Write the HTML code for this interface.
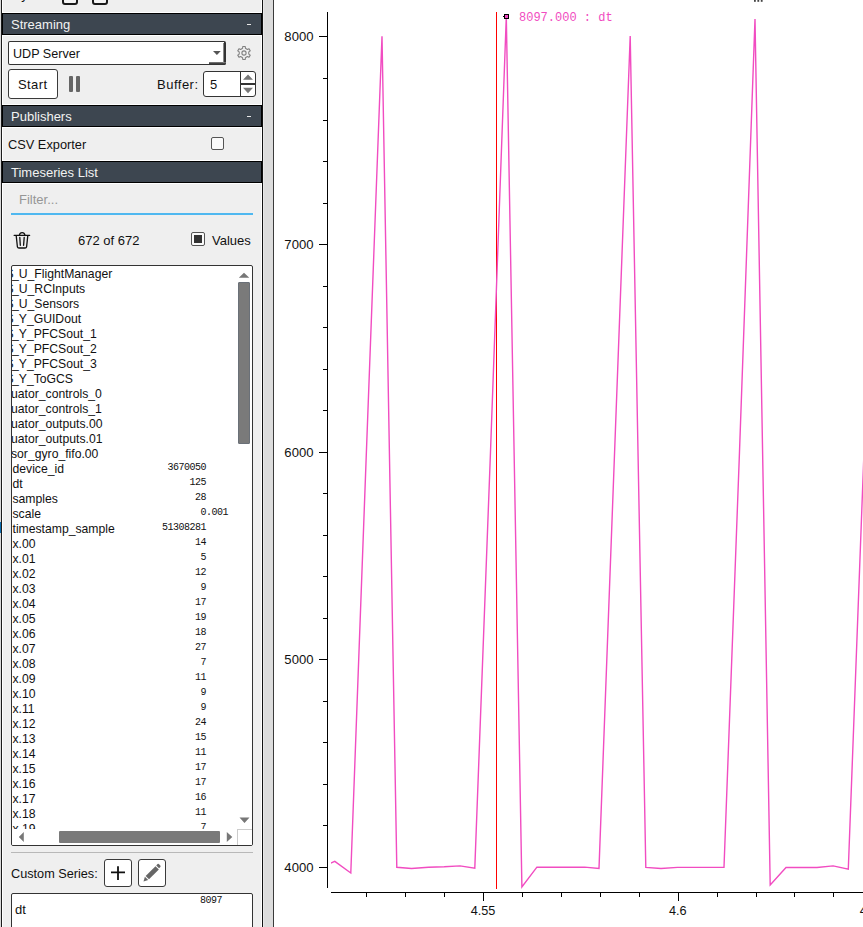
<!DOCTYPE html>
<html><head><meta charset="utf-8">
<style>
html,body{margin:0;padding:0}
body{width:863px;height:927px;overflow:hidden;position:relative;background:#fff;font-family:"Liberation Sans",sans-serif;color:#111}
.a{position:absolute}
.t{position:absolute;white-space:nowrap;font-size:13px;line-height:20px}
.hdr{position:absolute;left:2px;width:258px;height:20px;background:#3d4650;border:1px solid #000}
.hdr span{position:absolute;left:8px;top:1px;font-size:13px;line-height:20px;color:#f2f2f2;white-space:nowrap}
.hdr i{position:absolute;left:244px;top:10px;width:4px;height:1px;background:#e8e8e8}
.btn{position:absolute;background:#fff;border:1px solid #3a3a3a;border-radius:3px;box-sizing:border-box}
.row{position:absolute;left:0;white-space:nowrap;font-size:12.2px;line-height:15px;height:15px}
.val{position:absolute;white-space:nowrap;font-family:"Liberation Mono",monospace;font-size:10px;letter-spacing:-0.5px;line-height:15px;text-align:right}
</style></head><body>

<!-- left panel -->
<div class="a" style="left:0;top:0;width:1px;height:927px;background:#d9d9d9"></div>
<div class="a" style="left:1px;top:0;width:1px;height:927px;background:#1c1c1c"></div>
<div class="a" style="left:2px;top:0;width:260px;height:927px;background:#efefef"></div>
<div class="a" style="left:2px;top:0;width:1px;height:927px;background:#fff"></div>
<div class="a" style="left:261px;top:0;width:1px;height:927px;background:#fff"></div>
<div class="a" style="left:262px;top:0;width:1px;height:927px;background:#111"></div>
<div class="a" style="left:263px;top:0;width:1px;height:927px;background:#e8e8e8"></div>
<div class="a" style="left:264px;top:0;width:9px;height:927px;background:#dcdcdc"></div>
<div class="a" style="left:273px;top:0;width:1px;height:927px;background:#3a3a3a"></div>

<!-- top partial row -->
<div class="t" style="left:12.6px;top:-15.3px">Sync</div>
<div class="a" style="left:62px;top:-11px;width:12px;height:12px;border:2px solid #1a1a1a;border-radius:3px;background:#f4f4f4"></div>
<div class="a" style="left:92px;top:-11px;width:12px;height:12px;border:2px solid #1a1a1a;border-radius:3px;background:#f4f4f4"></div>

<!-- Streaming -->
<div class="a" style="left:2px;top:12px;width:260px;height:1px;background:#fff"></div>
<div class="hdr" style="top:13px"><span>Streaming</span><i></i></div>
<div class="a" style="left:2px;top:35px;width:260px;height:1px;background:#fff"></div>

<div class="a" style="left:8px;top:41px;width:215px;height:22px;background:#fff;border:1px solid #333;border-right:2px solid #333;border-radius:2px"></div>
<div class="a" style="left:209px;top:62px;width:17px;height:3px;background:linear-gradient(#888,#333 60%);border-radius:0 0 2px 0"></div>
<div class="a" style="left:223px;top:43px;width:1px;height:20px;background:linear-gradient(90deg,#999,#777)"></div>
<div class="t" style="left:13px;top:44px;font-size:12.6px">UDP Server</div>
<svg class="a" style="left:212px;top:49px" width="10" height="7"><path d="M1,2.1 L8.8,2.1 L4.9,6 Z" fill="#555"/></svg>
<!-- gear -->
<svg class="a" style="left:235px;top:44px" width="18" height="18" viewBox="0 0 18 18">
<path fill="none" stroke="#808080" stroke-width="1.1" stroke-linejoin="round" d="M7.57,4.31 L7.74,2.52 L10.26,2.52 L10.43,4.31 L12.34,5.42 L13.98,4.67 L15.24,6.85 L13.77,7.90 L13.77,10.10 L15.24,11.15 L13.98,13.33 L12.34,12.58 L10.43,13.69 L10.26,15.48 L7.74,15.48 L7.57,13.69 L5.66,12.58 L4.02,13.33 L2.76,11.15 L4.23,10.10 L4.23,7.90 L2.76,6.85 L4.02,4.67 L5.66,5.42 Z"/>
<circle cx="9" cy="9" r="2.1" fill="none" stroke="#808080" stroke-width="1.1"/>
</svg>

<div class="btn" style="left:8px;top:69px;width:50px;height:30px"></div>
<div class="t" style="left:18px;top:75px;letter-spacing:0.4px">Start</div>
<div class="a" style="left:69.3px;top:75.8px;width:4.2px;height:16.2px;background:#666;border-radius:1px"></div>
<div class="a" style="left:76px;top:75.8px;width:4.4px;height:16.2px;background:#666;border-radius:1px"></div>
<div class="t" style="left:157px;top:75px;letter-spacing:0.5px">Buffer:</div>
<div class="a" style="left:203px;top:71px;width:51px;height:24px;background:#fff;border:1px solid #333;border-radius:3px"></div>
<div class="a" style="left:240px;top:72px;width:1px;height:24px;background:#333"></div>
<div class="a" style="left:241px;top:83px;width:14px;height:1.5px;background:#333"></div>
<svg class="a" style="left:242px;top:73px" width="12" height="22"><path d="M1,6.8 L11,6.8 L6,1.5 Z M1,14.8 L11,14.8 L6,20.2 Z" fill="#777"/></svg>
<div class="t" style="left:210px;top:75px">5</div>

<!-- Publishers -->
<div class="a" style="left:2px;top:104px;width:260px;height:1px;background:#fff"></div>
<div class="hdr" style="top:105px"><span>Publishers</span><i></i></div>
<div class="a" style="left:2px;top:127px;width:260px;height:1px;background:#fff"></div>
<div class="t" style="left:8px;top:135px;font-size:12.8px">CSV Exporter</div>
<div class="a" style="left:211px;top:137px;width:11px;height:11px;border:1.5px solid #555;border-radius:2px;background:#fafafa"></div>

<!-- Timeseries List -->
<div class="a" style="left:2px;top:160px;width:260px;height:1px;background:#fff"></div>
<div class="hdr" style="top:161px"><span>Timeseries List</span></div>
<div class="a" style="left:2px;top:183px;width:260px;height:1px;background:#fff"></div>
<div class="t" style="left:19px;top:190px;color:#969696">Filter...</div>
<div class="a" style="left:11px;top:213px;width:242px;height:2px;background:#4fb8f0"></div>

<svg class="a" style="left:12px;top:229px" width="20" height="21" viewBox="0 0 20 21">
<g fill="none" stroke="#111" stroke-width="1.3" stroke-linecap="round" stroke-linejoin="round">
<path d="M2.2,6.4 L17.6,6.4"/>
<path d="M7.4,6.2 A2.8,3.2 0 0 1 12.9,6.2"/>
<path d="M4.2,6.6 L5.4,17.8 Q5.7,19 7,19 L13,19 Q14.3,19 14.6,17.8 L15.8,6.6"/>
<path d="M7.8,8.4 L8.3,16.3 M12.2,8.4 L11.6,16.3"/>
</g></svg>
<div class="t" style="left:78px;top:231px">672 of 672</div>
<div class="a" style="left:191px;top:232px;width:11.5px;height:11.5px;border:1.5px solid #555;border-radius:2px;background:#fafafa"></div>
<div class="a" style="left:194px;top:235px;width:8px;height:8px;background:#333"></div>
<div class="t" style="left:212px;top:231px">Values</div>

<!-- list box -->
<div class="a" id="list" style="left:11px;top:265px;width:240px;height:579px;background:#fff;border:1px solid #333;border-radius:2px;overflow:hidden">
<div class="row" style="top:1px;left:-6.5px">S</div><div class="row" style="top:1px;left:0px">_U_FlightManager</div>
<div class="row" style="top:16px;left:-6.5px">S</div><div class="row" style="top:16px;left:0px">_U_RCInputs</div>
<div class="row" style="top:31px;left:-6.5px">S</div><div class="row" style="top:31px;left:0px">_U_Sensors</div>
<div class="row" style="top:46px;left:-6.5px">S</div><div class="row" style="top:46px;left:0px">_Y_GUIDout</div>
<div class="row" style="top:61px;left:-6.5px">S</div><div class="row" style="top:61px;left:0px">_Y_PFCSout_1</div>
<div class="row" style="top:76px;left:-6.5px">S</div><div class="row" style="top:76px;left:0px">_Y_PFCSout_2</div>
<div class="row" style="top:91px;left:-6.5px">S</div><div class="row" style="top:91px;left:0px">_Y_PFCSout_3</div>
<div class="row" style="top:106px;left:-6.5px">S</div><div class="row" style="top:106px;left:0px">_Y_ToGCS</div>
<div class="row" style="top:121px;left:-1px">uator_controls_0</div>
<div class="row" style="top:136px;left:-1px">uator_controls_1</div>
<div class="row" style="top:151px;left:-1px">uator_outputs.00</div>
<div class="row" style="top:166px;left:-1px">uator_outputs.01</div>
<div class="row" style="top:181px;left:-1px">sor_gyro_fifo.00</div>
<div class="row" style="top:196px;left:0.5px">device_id</div>
<div class="val" style="top:194px;left:129px;width:65px">3670050</div>
<div class="row" style="top:211px;left:0.5px">dt</div>
<div class="val" style="top:209px;left:129px;width:65px">125</div>
<div class="row" style="top:226px;left:0.5px">samples</div>
<div class="val" style="top:224px;left:129px;width:65px">28</div>
<div class="row" style="top:241px;left:0.5px">scale</div>
<div class="val" style="top:239px;left:150px;width:66px">0.001</div>
<div class="row" style="top:256px;left:0.5px">timestamp_sample</div>
<div class="val" style="top:254px;left:129px;width:65px">51308281</div>
<div class="row" style="top:271px;left:0.5px">x.00</div>
<div class="val" style="top:269px;left:129px;width:65px">14</div>
<div class="row" style="top:286px;left:0.5px">x.01</div>
<div class="val" style="top:284px;left:129px;width:65px">5</div>
<div class="row" style="top:301px;left:0.5px">x.02</div>
<div class="val" style="top:299px;left:129px;width:65px">12</div>
<div class="row" style="top:316px;left:0.5px">x.03</div>
<div class="val" style="top:314px;left:129px;width:65px">9</div>
<div class="row" style="top:331px;left:0.5px">x.04</div>
<div class="val" style="top:329px;left:129px;width:65px">17</div>
<div class="row" style="top:346px;left:0.5px">x.05</div>
<div class="val" style="top:344px;left:129px;width:65px">19</div>
<div class="row" style="top:361px;left:0.5px">x.06</div>
<div class="val" style="top:359px;left:129px;width:65px">18</div>
<div class="row" style="top:376px;left:0.5px">x.07</div>
<div class="val" style="top:374px;left:129px;width:65px">27</div>
<div class="row" style="top:391px;left:0.5px">x.08</div>
<div class="val" style="top:389px;left:129px;width:65px">7</div>
<div class="row" style="top:406px;left:0.5px">x.09</div>
<div class="val" style="top:404px;left:129px;width:65px">11</div>
<div class="row" style="top:421px;left:0.5px">x.10</div>
<div class="val" style="top:419px;left:129px;width:65px">9</div>
<div class="row" style="top:436px;left:0.5px">x.11</div>
<div class="val" style="top:434px;left:129px;width:65px">9</div>
<div class="row" style="top:451px;left:0.5px">x.12</div>
<div class="val" style="top:449px;left:129px;width:65px">24</div>
<div class="row" style="top:466px;left:0.5px">x.13</div>
<div class="val" style="top:464px;left:129px;width:65px">15</div>
<div class="row" style="top:481px;left:0.5px">x.14</div>
<div class="val" style="top:479px;left:129px;width:65px">11</div>
<div class="row" style="top:496px;left:0.5px">x.15</div>
<div class="val" style="top:494px;left:129px;width:65px">17</div>
<div class="row" style="top:511px;left:0.5px">x.16</div>
<div class="val" style="top:509px;left:129px;width:65px">17</div>
<div class="row" style="top:526px;left:0.5px">x.17</div>
<div class="val" style="top:524px;left:129px;width:65px">16</div>
<div class="row" style="top:541px;left:0.5px">x.18</div>
<div class="val" style="top:539px;left:129px;width:65px">11</div>
<div class="row" style="top:556px;left:0.5px">x.19</div>
<div class="val" style="top:554px;left:129px;width:65px">7</div>
<svg class="a" style="left:0;top:0" width="240" height="579"><path d="M226.8,11.8 L237.3,11.8 L232,6.8 Z M227.5,551.5 L237.5,551.5 L232.5,557 Z M12.5,572 L7.5,571.5 L12.5,566.5 Z" fill="#777"/></svg>
<div class="a" style="left:226px;top:16px;width:10px;height:160px;background:#7a7a7a;border:1px solid #6a7078;border-radius:1px"></div>
<div class="a" style="left:0;top:563px;width:240px;height:16px;background:#fff"></div>
<div class="a" style="left:47px;top:565px;width:161px;height:11.5px;background:#7a7a7a;border-radius:1px"></div>
<svg class="a" style="left:-1px;top:563px" width="240" height="15"><path d="M12.8,3 L12.8,13 L7.8,8 Z M215.8,3 L215.8,13 L221.3,8 Z" fill="#777"/></svg>
<div class="a" style="left:225px;top:563px;width:14px;height:15px;background:#fff;border:1px solid #ccc"></div>
</div>

<!-- separator / custom series -->
<div class="a" style="left:11px;top:852px;width:242px;height:1px;background:#b8b8b8"></div>
<div class="t" style="left:11px;top:864px;font-size:12.7px">Custom Series:</div>
<div class="btn" style="left:104px;top:859px;width:28px;height:28px;border-width:1.5px"></div>
<svg class="a" style="left:104px;top:859px" width="28" height="28"><path d="M7,13.4 L21,13.4 M14,7.2 L14,21" stroke="#111" stroke-width="1.8"/></svg>
<div class="btn" style="left:138px;top:859px;width:28px;height:28px;border-width:1.5px"></div>
<svg class="a" style="left:138px;top:859px" width="28" height="28">
<g fill="#666" transform="translate(5.5,22.6) scale(0.93) translate(-5.5,-22.6)">
<path d="M5.5,22.6 L7,17.4 L10.6,21 Z"/>
<path d="M7.8,16.6 L18.4,6 L22,9.6 L11.4,20.2 Z"/>
<path d="M19.2,5.2 L20.6,3.8 Q21.3,3.2 22,3.8 L23.6,5.4 Q24.2,6.1 23.6,6.8 L22.2,8.2 Z"/>
</g></svg>
<div class="a" style="left:11px;top:893px;width:240px;height:40px;background:#fff;border:1px solid #333;border-radius:2px"></div>
<div class="t" style="left:15px;top:900px">dt</div>
<div class="val" style="left:171px;top:893px;width:51px">8097</div>

<div class="a" style="left:0;top:522px;width:1px;height:11px;background:#0b6db0"></div>

<!-- plot -->
<svg class="a" style="left:0;top:0" width="863" height="927">
<defs><clipPath id="pc"><rect x="331" y="0" width="532" height="927"/></clipPath></defs>
<g stroke="#000" stroke-width="1" shape-rendering="crispEdges">
<line x1="327.5" y1="12" x2="327.5" y2="888"/>
<line x1="319" y1="867.5" x2="327" y2="867.5"/>
<line x1="323" y1="825.5" x2="327" y2="825.5"/>
<line x1="323" y1="784.5" x2="327" y2="784.5"/>
<line x1="323" y1="742.5" x2="327" y2="742.5"/>
<line x1="323" y1="701.5" x2="327" y2="701.5"/>
<line x1="319" y1="659.5" x2="327" y2="659.5"/>
<line x1="323" y1="618.5" x2="327" y2="618.5"/>
<line x1="323" y1="576.5" x2="327" y2="576.5"/>
<line x1="323" y1="535.5" x2="327" y2="535.5"/>
<line x1="323" y1="493.5" x2="327" y2="493.5"/>
<line x1="319" y1="452.5" x2="327" y2="452.5"/>
<line x1="323" y1="410.5" x2="327" y2="410.5"/>
<line x1="323" y1="369.5" x2="327" y2="369.5"/>
<line x1="323" y1="327.5" x2="327" y2="327.5"/>
<line x1="323" y1="286.5" x2="327" y2="286.5"/>
<line x1="319" y1="244.5" x2="327" y2="244.5"/>
<line x1="323" y1="203.5" x2="327" y2="203.5"/>
<line x1="323" y1="161.5" x2="327" y2="161.5"/>
<line x1="323" y1="120.5" x2="327" y2="120.5"/>
<line x1="323" y1="78.5" x2="327" y2="78.5"/>
<line x1="319" y1="36.5" x2="327" y2="36.5"/>
<line x1="331" y1="892.5" x2="863" y2="892.5"/>
<line x1="366.5" y1="893" x2="366.5" y2="897"/>
<line x1="405.5" y1="893" x2="405.5" y2="897"/>
<line x1="444.5" y1="893" x2="444.5" y2="897"/>
<line x1="483.5" y1="893" x2="483.5" y2="901"/>
<line x1="522.5" y1="893" x2="522.5" y2="897"/>
<line x1="561.5" y1="893" x2="561.5" y2="897"/>
<line x1="600.5" y1="893" x2="600.5" y2="897"/>
<line x1="639.5" y1="893" x2="639.5" y2="897"/>
<line x1="678.5" y1="893" x2="678.5" y2="901"/>
<line x1="717.5" y1="893" x2="717.5" y2="897"/>
<line x1="756.5" y1="893" x2="756.5" y2="897"/>
<line x1="794.5" y1="893" x2="794.5" y2="897"/>
<line x1="833.5" y1="893" x2="833.5" y2="897"/>
</g>
<g font-family="Liberation Sans" font-size="13.1" fill="#111" text-anchor="end">
<text x="313.5" y="871.5">4000</text>
<text x="313.5" y="663.5">5000</text>
<text x="313.5" y="456.5">6000</text>
<text x="313.5" y="248.5">7000</text>
<text x="313.5" y="40.5">8000</text>
</g>
<g font-family="Liberation Sans" font-size="12.7" fill="#111" text-anchor="middle">
<text x="483.1" y="915">4.55</text>
<text x="677.7" y="915">4.6</text>
<text x="872.2" y="915">4.65</text>
</g>
<line x1="496.5" y1="12" x2="496.5" y2="889" stroke="#ff0000" stroke-width="1" shape-rendering="crispEdges"/>
<path clip-path="url(#pc)" d="M319.8,867.3 L334.8,861.4 L350.8,873.0 L366.4,451.7 L382.0,36.2 L396.8,867.3 L411.5,868.5 L428.5,867.3 L444.2,866.8 L460.0,865.9 L474.8,868.2 L490.5,451.7 L506.3,16.5 L521.9,887.0 L536.9,867.2 L553.0,867.2 L568.7,867.2 L584.6,867.1 L599.0,868.4 L614.6,451.7 L630.2,36.0 L645.8,867.4 L661.0,868.5 L677.5,867.4 L693.0,867.4 L708.5,867.4 L724.0,867.4 L739.5,451.7 L755.0,19.0 L770.2,885.0 L786.0,867.5 L801.7,867.5 L817.0,867.5 L833.1,865.9 L848.3,869.2 L864.0,451.7" fill="none" stroke="#f14cc1" stroke-width="1.4" stroke-linejoin="miter"/>
<rect x="504.5" y="14.5" width="4" height="4" fill="#f14cc1" stroke="#000" stroke-width="1"/>
<line x1="503" y1="16.5" x2="504.5" y2="16.5" stroke="#000" stroke-width="1"/>
<text x="519" y="21" font-family="Liberation Mono" font-size="12" fill="#f14cc1">8097.000 : dt</text>
<rect x="754" y="0" width="1.8" height="1.8" fill="#444"/><rect x="757.4" y="0" width="1.8" height="1.8" fill="#444"/><rect x="760.8" y="0" width="1.8" height="1.8" fill="#444"/>
</svg>

</body></html>
